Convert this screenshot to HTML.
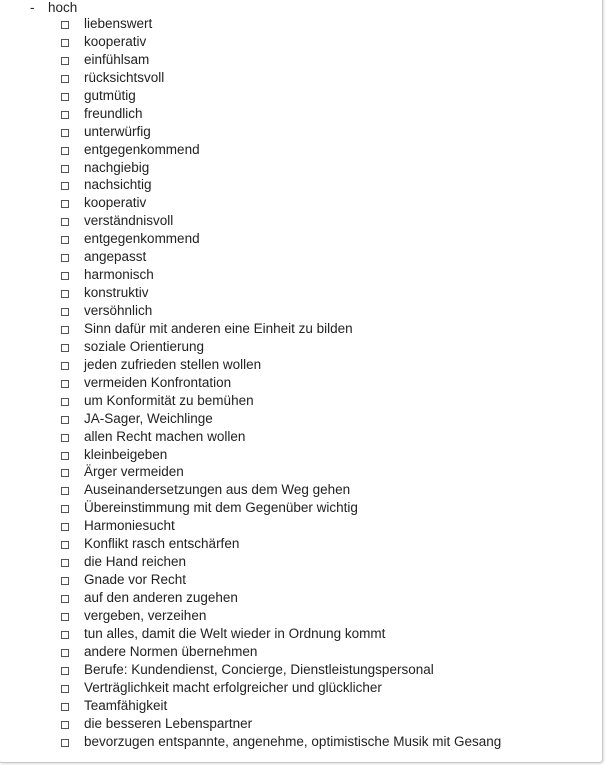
<!DOCTYPE html>
<html><head><meta charset="utf-8"><style>
html,body{margin:0;padding:0;background:#fff;}
body{width:606px;height:765px;position:relative;overflow:hidden;font-family:"Liberation Sans",sans-serif;font-size:13.5px;color:#222;}
.box{position:absolute;left:-2px;top:-4px;width:603px;height:765px;border:1px solid #c8c8c8;border-radius:4px;box-shadow:1px 1px 2px #ddd;}
.l{position:absolute;white-space:nowrap;line-height:18px;}
.d{left:30px;top:-1px}
.h{left:48px;top:-1px}
ul{position:absolute;left:0;top:15px;margin:0;padding:0;list-style:none;}
li{height:17.95px;line-height:18px;position:relative;padding-left:84px;white-space:nowrap;}
li:before{content:"";position:absolute;left:61px;top:6px;width:6px;height:6px;border:1px solid #555;}
</style></head><body>
<div class="box"></div>
<div class="l d">-</div><div class="l h">hoch</div>
<ul>
<li>liebenswert</li><li>kooperativ</li><li>einfühlsam</li><li>rücksichtsvoll</li><li>gutmütig</li><li>freundlich</li><li>unterwürfig</li><li>entgegenkommend</li><li>nachgiebig</li><li>nachsichtig</li><li>kooperativ</li><li>verständnisvoll</li><li>entgegenkommend</li><li>angepasst</li><li>harmonisch</li><li>konstruktiv</li><li>versöhnlich</li><li>Sinn dafür mit anderen eine Einheit zu bilden</li><li>soziale Orientierung</li><li>jeden zufrieden stellen wollen</li><li>vermeiden Konfrontation</li><li>um Konformität zu bemühen</li><li>JA-Sager, Weichlinge</li><li>allen Recht machen wollen</li><li>kleinbeigeben</li><li>Ärger vermeiden</li><li>Auseinandersetzungen aus dem Weg gehen</li><li>Übereinstimmung mit dem Gegenüber wichtig</li><li>Harmoniesucht</li><li>Konflikt rasch entschärfen</li><li>die Hand reichen</li><li>Gnade vor Recht</li><li>auf den anderen zugehen</li><li>vergeben, verzeihen</li><li>tun alles, damit die Welt wieder in Ordnung kommt</li><li>andere Normen übernehmen</li><li>Berufe: Kundendienst, Concierge, Dienstleistungspersonal</li><li>Verträglichkeit macht erfolgreicher und glücklicher</li><li>Teamfähigkeit</li><li>die besseren Lebenspartner</li><li>bevorzugen entspannte, angenehme, optimistische Musik mit Gesang</li>
</ul>
</body></html>
